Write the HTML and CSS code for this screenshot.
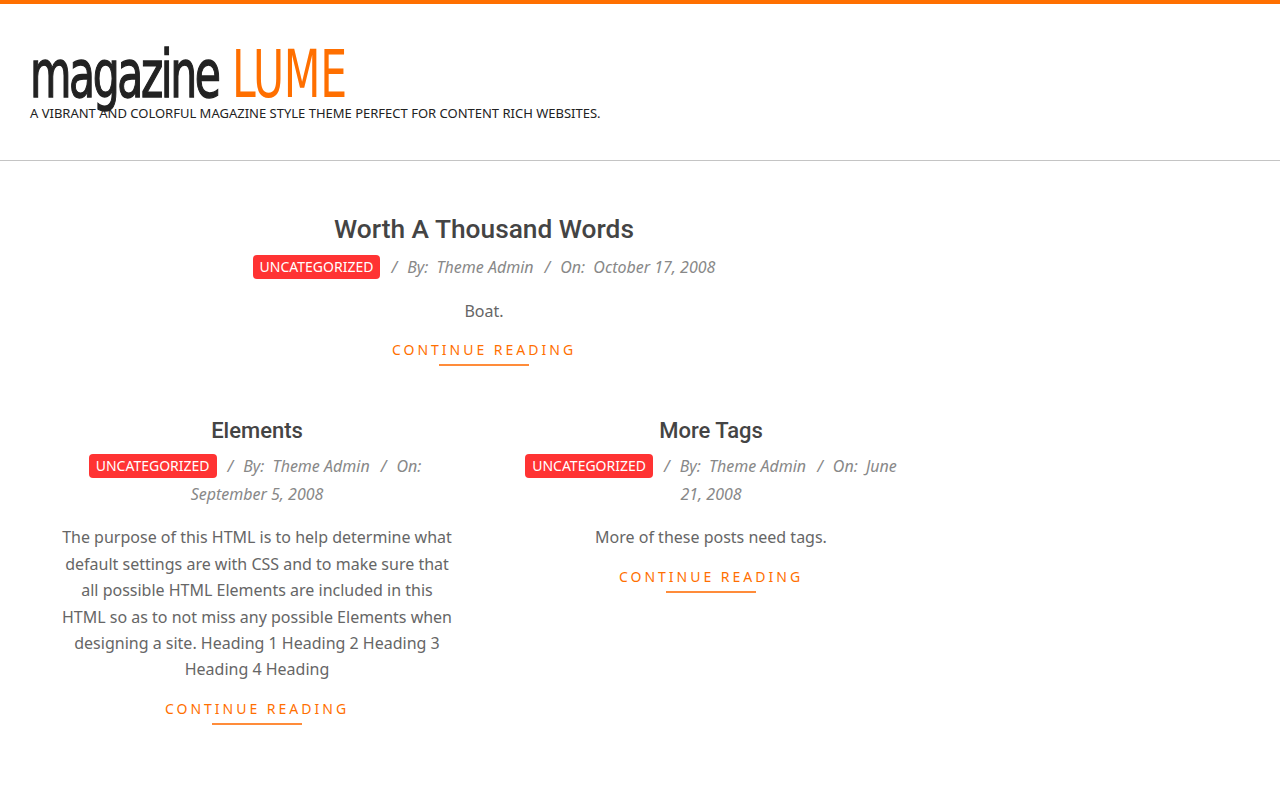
FILE: index.html
```html
<!DOCTYPE html>
<html lang="en">
<head>
<meta charset="utf-8">
<title>magazine LUME</title>
<link rel="stylesheet" href="styles.css">
</head>
<body>
<div class="topbar"></div>
<header class="site-header">
  <div class="branding">
    <a class="logo" href="#"><span class="logo-a">magazine</span> <span class="logo-b">LUME</span></a>
    <p class="tagline">A vibrant and colorful magazine style theme perfect for content rich websites.</p>
  </div>
</header>
<main class="content">
  <article class="post post-wide">
    <h2 class="post-title">Worth A Thousand Words</h2>
    <div class="meta"><a class="cat" href="#">UNCATEGORIZED</a><span class="sep">/</span><span class="lbl">By:</span> <span>Theme Admin</span><span class="sep">/</span><span class="lbl">On:</span> <span>October 17, 2008</span></div>
    <p class="excerpt">Boat.</p>
    <a class="more" href="#">CONTINUE READING</a>
  </article>
  <div class="grid">
    <article class="post">
      <h2 class="post-title small">Elements</h2>
      <div class="meta"><a class="cat" href="#">UNCATEGORIZED</a><span class="sep">/</span><span class="lbl">By:</span> <span>Theme Admin</span><span class="sep">/</span><span class="lbl">On:</span> <span>September 5, 2008</span></div>
      <p class="excerpt">The purpose of this HTML is to help determine what default settings are with CSS and to make sure that all possible HTML Elements are included in this HTML so as to not miss any possible Elements when designing a site. Heading 1 Heading 2 Heading 3 Heading 4 Heading</p>
      <a class="more" href="#">CONTINUE READING</a>
    </article>
    <article class="post">
      <h2 class="post-title small">More Tags</h2>
      <div class="meta"><a class="cat" href="#">UNCATEGORIZED</a><span class="sep">/</span><span class="lbl">By:</span> <span>Theme Admin</span><span class="sep">/</span><span class="lbl">On:</span> <span>June 21, 2008</span></div>
      <p class="excerpt">More of these posts need tags.</p>
      <a class="more" href="#">CONTINUE READING</a>
    </article>
  </div>
</main>
</body>
</html>
```
FILE: styles.css
```css
html, body {
  margin: 0;
  padding: 0;
  background: #fff;
}
body {
  font-family: "Noto Sans", "DejaVu Sans", sans-serif;
  color: #666;
  font-size: 16px;
}
a { text-decoration: none; }
.topbar {
  height: 4px;
  background: #ff6f00;
}
.site-header {
  height: 157px;
  border-bottom: 1px solid #c4c4c4;
  box-sizing: border-box;
  padding: 38px 30px 0;
}
.logo {
  display: block;
  font-family: "DejaVu Sans Condensed", "DejaVu Sans", sans-serif;
  font-size: 66px;
  line-height: 66px;
  height: 62px;
  white-space: nowrap;
  transform: scaleX(0.717);
  transform-origin: left center;
}
.logo-a {
  color: #222;
  letter-spacing: -3.4px;
  -webkit-text-stroke: 1.3px #222;
}
.logo-b {
  color: #ff6f00;
  letter-spacing: -0.5px;
}
.tagline {
  margin: 0;
  font-size: 13px;
  line-height: 18px;
  text-transform: uppercase;
  color: #222;
}
.content {
  width: 908px;
  margin-left: 30px;
  padding-top: 50px;
}
.post {
  text-align: center;
  padding: 0 30px;
}
.post-wide { padding-bottom: 50px; }
.post-title {
  font-family: Roboto, "Liberation Sans", sans-serif;
  font-weight: 500;
  font-size: 26.3px;
  line-height: 36px;
  color: #444;
  margin: 0 0 6px;
}
.post-title.small {
  font-size: 22px;
  line-height: 30px;
  margin-bottom: 6px;
}
.meta {
  font-style: italic;
  color: #888;
  font-size: 16px;
  line-height: 28px;
}
.cat {
  display: inline-block;
  font-style: normal;
  background: #ff3333;
  color: #fff;
  font-size: 14px;
  line-height: 24px;
  padding: 0 7px;
  border-radius: 4px;
  vertical-align: 1px;
}
.sep {
  margin: 0 10px 0 11px;
}
.lbl {
  margin-right: 4px;
}
.excerpt {
  margin: 17px 0 0;
  line-height: 26.4px;
}
.grid .excerpt {
  margin-top: 16px;
}
.more {
  display: inline-block;
  margin-top: 17px;
  color: #ff6f00;
  font-size: 14px;
  letter-spacing: 3px;
  line-height: 18px;
  position: relative;
  padding-bottom: 7px;
}
.more::after {
  content: "";
  position: absolute;
  left: 50%;
  bottom: 0;
  width: 90px;
  margin-left: -45px;
  height: 2px;
  background: #ff8c3a;
}
.grid {
  display: grid;
  grid-template-columns: 1fr 1fr;
}
```
